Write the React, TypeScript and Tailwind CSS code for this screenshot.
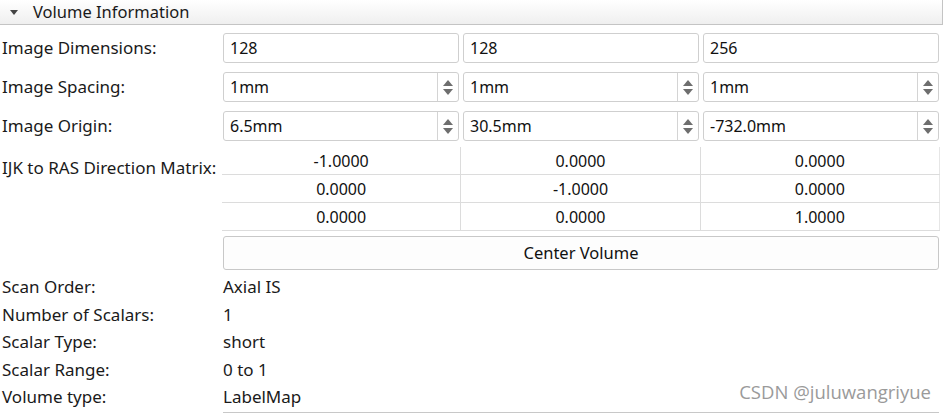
import React from "react";

const font = { fontFamily: '"Noto Sans", "Open Sans", sans-serif' };

function Field({ value, spin }: { value: string; spin?: boolean }) {
  return (
    <div className="flex-1 h-[30px] flex items-stretch rounded-[3px] border border-[#cfcfcf] bg-white overflow-hidden">
      <div className="flex-1 flex items-center pl-[6px] text-[16px] text-[#111]">{value}</div>
      {spin && (
        <div className="w-[21px] border-l border-[#d4d4d4] flex flex-col items-center justify-center gap-[3px]">
          <svg width="10" height="6" viewBox="0 0 10 6"><path d="M0 6 L5 0 L10 6 Z" fill="#6e6e6e" /></svg>
          <svg width="10" height="6" viewBox="0 0 10 6"><path d="M0 0 L10 0 L5 6 Z" fill="#6e6e6e" /></svg>
        </div>
      )}
    </div>
  );
}

function FieldRow({ label, values, spin }: { label: string; values: string[]; spin?: boolean }) {
  return (
    <div className="flex items-center h-[30px]">
      <div className="w-[223px] pl-[2px] text-[17px] text-[#1a1a1a]">{label}</div>
      <div className="flex-1 flex gap-[4px]">
        {values.map((v, i) => (
          <Field key={i} value={v} spin={spin} />
        ))}
      </div>
    </div>
  );
}

const matrix = [
  ["-1.0000", "0.0000", "0.0000"],
  ["0.0000", "-1.0000", "0.0000"],
  ["0.0000", "0.0000", "1.0000"],
];

const info = [
  ["Scan Order:", "Axial IS"],
  ["Number of Scalars:", "1"],
  ["Scalar Type:", "short"],
  ["Scalar Range:", "0 to 1"],
  ["Volume type:", "LabelMap"],
];

export default function App() {
  return (
    <div className="w-[945px] h-[413px] bg-white relative overflow-hidden" style={font}>
      {/* header */}
      <div className="h-[25px] flex items-center bg-gradient-to-b from-white to-[#efefef] border-b border-[#c4c4c4] border-r mr-[2px]">
        <svg width="10" height="7" viewBox="0 0 10 7" className="ml-[9px]">
          <path d="M1 1 L9 1 L5 6 Z" fill="#444" />
        </svg>
        <span className="ml-[14px] text-[16.5px] text-[#1a1a1a]">Volume Information</span>
      </div>

      <div className="pr-[6px] pt-[8px] flex flex-col gap-[9px]">
        <FieldRow label="Image Dimensions:" values={["128", "128", "256"]} />
        <FieldRow label="Image Spacing:" values={["1mm", "1mm", "1mm"]} spin />
        <FieldRow label="Image Origin:" values={["6.5mm", "30.5mm", "-732.0mm"]} spin />
      </div>

      {/* matrix */}
      <div className="flex pr-[5px] mt-[6px]">
        <div className="w-[222px] pl-[2px] pt-[8px] text-[17px] text-[#1a1a1a] whitespace-nowrap relative z-10">
          IJK to RAS Direction Matrix:
        </div>
        <div className="flex-1 flex flex-col">
          {matrix.map((row, r) => (
            <div key={r} className="flex h-[28px] border-b border-[#dcdcdc]">
              {row.map((c, i) => (
                <div
                  key={i}
                  className={`flex-1 flex items-center justify-center text-[16px] text-[#111] ${
                    i < 2 ? "border-r border-[#dcdcdc]" : "border-r border-[#e6e6e6]"
                  }`}
                >
                  {c}
                </div>
              ))}
            </div>
          ))}
        </div>
      </div>

      <div className="flex pr-[6px] mt-[5px]">
        <div className="w-[223px]" />
        <button className="flex-1 h-[34px] rounded-[3px] border border-[#c8c8c8] bg-[#fdfdfd] text-[16.5px] text-[#111]">
          Center Volume
        </button>
      </div>

      <div className="mt-[3px] flex flex-col">
        {info.map(([k, v], i) => (
          <div key={i} className="flex items-center h-[27.5px] text-[17px] text-[#1a1a1a]">
            <div className="w-[223px] pl-[2px]">{k}</div>
            <div>{v}</div>
          </div>
        ))}
      </div>
      <div className="ml-[223px] mr-[6px] mt-[1px] border-b border-[#c8c8c8]" />

      <div className="absolute right-[14px] top-[378px] text-[18.5px] text-[#9a9a9a]" style={{ fontFamily: '"Open Sans", sans-serif' }}>
        CSDN @juluwangriyue
      </div>
    </div>
  );
}
